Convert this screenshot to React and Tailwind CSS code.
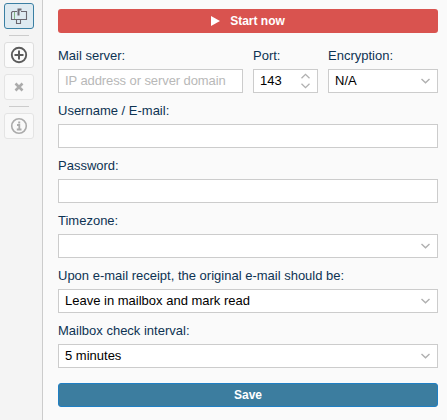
import React from "react";

function Chevron() {
  return (
    <svg className="ml-auto mr-[7px] shrink-0" width="9" height="6" viewBox="0 0 9 6" fill="none" stroke="#b0b0b0" strokeWidth="1.4">
      <path d="M.5 .9 4.500 4.700 8.500 .9" />
    </svg>
  );
}

function Spinner() {
  return (
    <svg className="ml-auto mr-[7px] shrink-0" width="9" height="16" viewBox="0 0 9 16" fill="none" stroke="#b0b0b0" strokeWidth="1.3">
      <path d="M.5 5.300 4.500 1.400 8.500 5.300M.5 10.700 4.500 14.600 8.500 10.700" />
    </svg>
  );
}

function Field({ label, width = "w-[380px]", children, end }) {
  return (
    <div className={`${width} h-[55px]`}>
      <div className="h-[26px] pt-[5px] text-[#0d3353] leading-[16px] whitespace-nowrap">{label}</div>
      <div className="h-[24px] border border-[#cccccc] bg-white pl-[6px] flex items-center whitespace-nowrap text-black">
        {children}
        {end}
      </div>
    </div>
  );
}

function ToolButton({ className = "border-[#dedede] bg-[#fbfbfb]", children }) {
  return (
    <button className={`w-[30px] h-[26px] shrink-0 border rounded-[3px] flex items-center justify-center ${className}`}>
      {children}
    </button>
  );
}

export default function App() {
  return (
    <div className="w-[447px] h-[420px] flex bg-[#fafafa] overflow-hidden font-['Liberation_Sans',Arial,sans-serif] text-[13px]">
      <aside className="w-[43px] border-r border-[#cccccc] bg-[#f4f4f4] pl-[4px] pt-[3px] flex flex-col">
        <ToolButton className="border-[#3a7fa3] bg-[#deeaf1]">
          <svg width="18" height="18" viewBox="0 0 18 18" fill="none" stroke="#6b6770" strokeWidth="1.1">
            <path d="M7 4.500H2.500L1.500 5.500V12.500H16.500V4.500H11M6.500 12.500V16.500H10.500V12.500" />
            <path d="M8.500 8.500V2.500H11.500" strokeWidth="2" />
            <path d="M4.500 5V12" stroke="#83b583" strokeWidth="1" />
          </svg>
        </ToolButton>
        <div className="ml-[5px] mt-[6px] mb-[6px] w-[20px] h-px bg-[#cccccc]" />
        <ToolButton>
          <svg width="18" height="18" viewBox="0 0 18 18" fill="none" stroke="#5c5c5c" strokeWidth="1.900">
            <circle cx="9" cy="9" r="7.200" />
            <path d="M9 4.500V13.500M4.500 9H13.500" strokeWidth="2" />
          </svg>
        </ToolButton>
        <ToolButton className="mt-[6px] border-[#e4e4e4] bg-[#f9f9f9]">
          <svg width="10" height="10" viewBox="0 0 10 10" fill="none" stroke="#ababab" strokeWidth="2.600">
            <path d="M1.500 1.500 8.500 8.500M8.500 1.500 1.500 8.500" />
          </svg>
        </ToolButton>
        <div className="ml-[5px] mt-[6px] mb-[6px] w-[20px] h-px bg-[#cccccc]" />
        <ToolButton className="border-[#e4e4e4] bg-[#f9f9f9]">
          <svg width="18" height="18" viewBox="0 0 18 18" fill="none" stroke="#ababab" strokeWidth="1.600">
            <circle cx="9" cy="9" r="7.300" />
            <path d="M7 8H9.300V12.500M6.800 12.500H11.500" strokeWidth="1.800" />
            <path d="M8.200 5.500H10.200" strokeWidth="2" />
          </svg>
        </ToolButton>
      </aside>
      <main className="pl-[15px] pt-[9px] w-[395px] flex flex-col">
        <button className="h-[24px] shrink-0 rounded-[3px] bg-[#d9534f] text-white font-bold text-[12px] flex items-center justify-center">
          <svg className="mr-[10px]" width="9" height="10" viewBox="0 0 9 10" fill="white">
            <path d="M0 0 9 5 0 10Z" />
          </svg>
          Start now
        </button>
        <div className="flex gap-[10px] mt-[10px]">
          <Field label="Mail server:" width="w-[185px]">
            <span className="text-[#b8b8b8] tracking-[-0.09px]">IP address or server domain</span>
          </Field>
          <Field label="Port:" width="w-[65px]" end={<Spinner />}>143</Field>
          <Field label="Encryption:" width="w-[110px]" end={<Chevron />}>N/A</Field>
        </div>
        <Field label="Username / E-mail:" />
        <Field label="Password:" />
        <Field label="Timezone:" end={<Chevron />} />
        <Field label="Upon e-mail receipt, the original e-mail should be:" end={<Chevron />}>Leave in mailbox and mark read</Field>
        <Field label="Mailbox check interval:" end={<Chevron />}>5 minutes</Field>
        <button className="mt-[10px] h-[24px] shrink-0 rounded-[3px] border border-[#1f7fc4] bg-[#3c7d9f] text-white font-bold text-[12px] leading-[22px]">
          Save
        </button>
      </main>
    </div>
  );
}
